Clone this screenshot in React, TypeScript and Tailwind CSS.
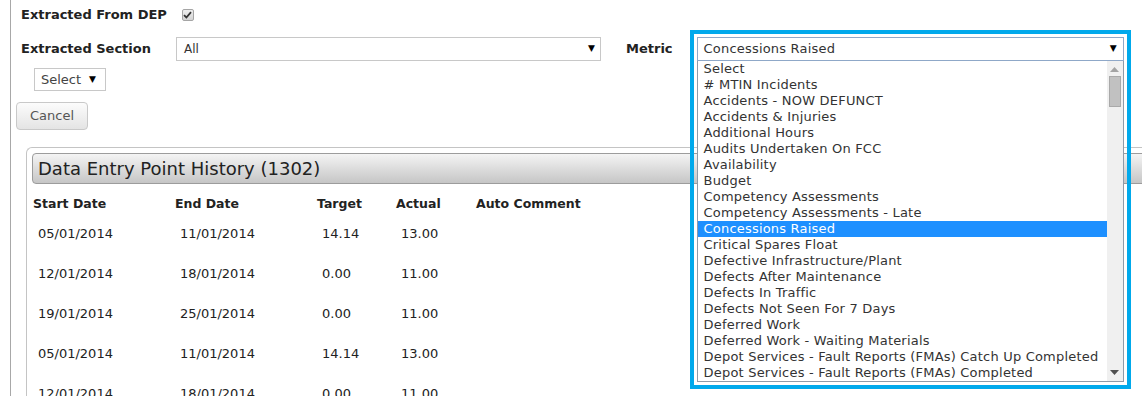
import React from "react";

const metrics = [
  "Select",
  "# MTIN Incidents",
  "Accidents - NOW DEFUNCT",
  "Accidents & Injuries",
  "Additional Hours",
  "Audits Undertaken On FCC",
  "Availability",
  "Budget",
  "Competency Assessments",
  "Competency Assessments - Late",
  "Concessions Raised",
  "Critical Spares Float",
  "Defective Infrastructure/Plant",
  "Defects After Maintenance",
  "Defects In Traffic",
  "Defects Not Seen For 7 Days",
  "Deferred Work",
  "Deferred Work - Waiting Materials",
  "Depot Services - Fault Reports (FMAs) Catch Up Completed",
  "Depot Services - Fault Reports (FMAs) Completed",
];

const rows = [
  ["05/01/2014", "11/01/2014", "14.14", "13.00"],
  ["12/01/2014", "18/01/2014", "0.00", "11.00"],
  ["19/01/2014", "25/01/2014", "0.00", "11.00"],
  ["05/01/2014", "11/01/2014", "14.14", "13.00"],
  ["12/01/2014", "18/01/2014", "0.00", "11.00"],
];

export default function App() {
  return (
    <div className="w-[1142px] h-[396px] overflow-hidden bg-white relative font-['DejaVu_Sans',sans-serif] text-[#333]">
      <div className="ml-[10px] border-l border-[#a8a8a8] pl-[5px] h-[396px] pt-[7px]">
        {/* Row 1 */}
        <div className="flex items-center h-[16px]">
          <span className="pl-[5px] text-[13px] font-bold leading-[16px] text-[#222]">Extracted From DEP</span>
          <span className="ml-[15px] w-[12px] h-[12px] rounded-[2px] border border-[#a5a5a5] bg-gradient-to-b from-[#eeeeee] to-[#d4d4d4] flex items-center justify-center">
            <svg width="9" height="8" viewBox="0 0 9 8">
              <path d="M1 4.2 L3.4 6.5 L8 1.2" stroke="#333" strokeWidth="1.8" fill="none" />
            </svg>
          </span>
        </div>

        {/* Row 2 */}
        <div className="flex items-center h-[24px] mt-[14px]">
          <span className="pl-[5px] w-[160px] text-[13px] font-bold leading-[16px] text-[#222]">Extracted Section</span>
          <div className="w-[425px] h-[24px] border border-[#c8c8c8] flex items-center justify-between pl-[7px] pr-[5px]">
            <span className="text-[12px] text-[#333]">All</span>
            <span className="text-[9px] text-black">▼</span>
          </div>
          <span className="ml-[25px] text-[13px] font-bold leading-[16px] text-[#222]">Metric</span>
          <div className="ml-[24px] relative w-[427px] h-[24px] z-20">
            <div className="w-[427px] h-[24px] border border-[#8fa8c8] flex items-center justify-between pl-[6px] pr-[6px] bg-white">
              <span className="text-[13px] tracking-[0.2px] text-[#333]">Concessions Raised</span>
              <span className="text-[9px] text-black">▼</span>
            </div>
            <div className="absolute left-0 top-[24px] w-[427px] h-[321px] border border-t-0 border-[#8e9aa8] bg-white flex">
              <div className="flex-1 flex flex-col">
                {metrics.map((m) => (
                  <div
                    key={m}
                    className={
                      "h-[16px] leading-[16px] pl-[6px] text-[13px] tracking-[0.2px] whitespace-nowrap " +
                      (m === "Concessions Raised" ? "bg-[#1e90ff] text-white" : "text-[#333]")
                    }
                  >
                    {m}
                  </div>
                ))}
              </div>
              <div className="w-[16px] bg-[#f0f0f0] flex flex-col items-center relative">
                <svg width="9" height="5" viewBox="0 0 9 5" className="mt-[6px]">
                  <path d="M0 5 L4.5 0 L9 5 Z" fill="#a3a3a3" />
                </svg>
                <div className="mt-[4px] w-[12px] h-[31px] bg-[#c1c1c1] border border-[#a9a9a9]" />
                <svg width="9" height="5" viewBox="0 0 9 5" className="absolute bottom-[6px]">
                  <path d="M0 0 L4.5 5 L9 0 Z" fill="#505050" />
                </svg>
              </div>
            </div>
            <div className="absolute -left-[7px] -top-[7px] w-[441px] h-[359px] border-[4px] border-[#00a9ec] pointer-events-none" />
          </div>
        </div>

        {/* Row 3 */}
        <div className="mt-[7px] ml-[18px] w-[72px] h-[23px] border border-[#c8c8c8] flex items-center pl-[6px] gap-[8px]">
          <span className="text-[13px] text-[#444]">Select</span>
          <span className="text-[9px] text-black">▼</span>
        </div>

        {/* Row 4 */}
        <button className="mt-[11px] w-[72px] h-[28px] rounded-[4px] border border-[#c9c9c9] bg-gradient-to-b from-[#fcfcfc] to-[#e4e4e4] text-[13px] text-[#555] flex items-center justify-center">
          Cancel
        </button>

        {/* Panel */}
        <div className="mt-[17px] ml-[10px] w-[1200px] h-[260px] border-l border-t border-[#c4c4c4] rounded-tl-[6px] pl-[5px] pt-[5px]">
          <div className="h-[31px] rounded-[4px] border border-[#9c9c9c] bg-gradient-to-b from-[#f4f4f4] to-[#c6c6c6] flex items-center pl-[5px]">
            <span className="text-[18px] text-[#222]">Data Entry Point History (1302)</span>
          </div>
          <div className="mt-[10px] grid grid-cols-[142px_142px_79px_80px_200px]">
            {["Start Date", "End Date", "Target", "Actual", "Auto Comment"].map((h) => (
              <div key={h} className="pl-[1px] h-[20px] leading-[20px] text-[12.5px] font-bold text-[#222]">
                {h}
              </div>
            ))}
            {rows.map((r, i) => (
              <React.Fragment key={i}>
                {r.map((c, j) => (
                  <div key={j} className="h-[40px] flex items-center pl-[6px] text-[13px] text-[#222]">
                    {c}
                  </div>
                ))}
                <div className="h-[40px]" />
              </React.Fragment>
            ))}
          </div>
        </div>
      </div>
    </div>
  );
}
